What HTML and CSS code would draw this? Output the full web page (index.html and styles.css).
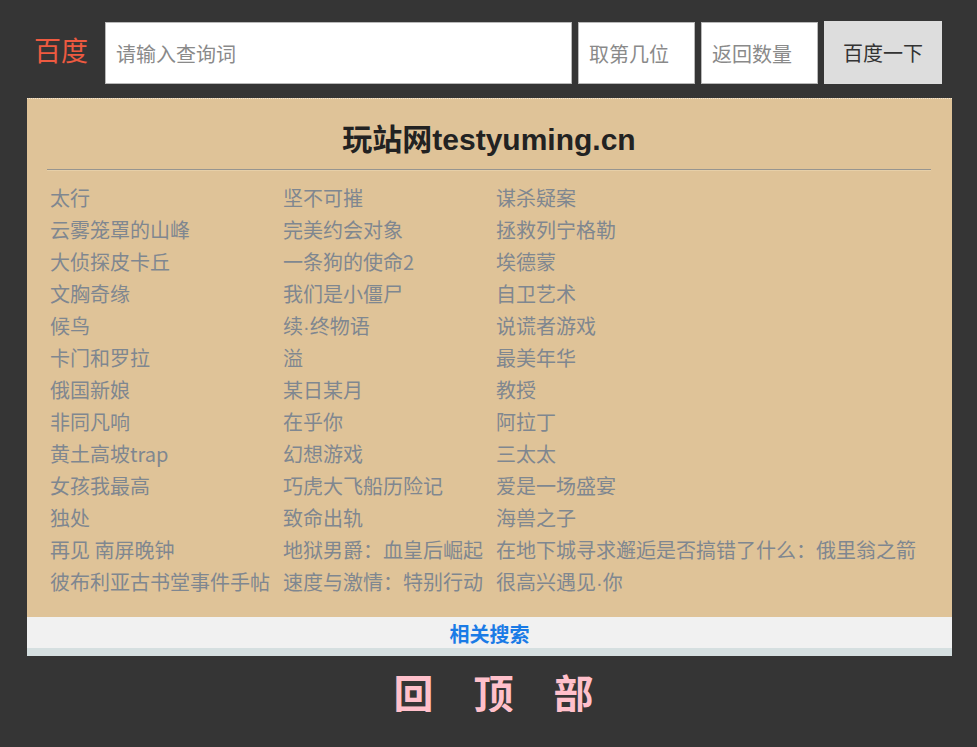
FILE: index.html
```html
<!DOCTYPE html>
<html lang="zh-CN">
<head>
<meta charset="utf-8">
<title>玩站网testyuming.cn</title>
<link rel="stylesheet" href="styles.css">
</head>
<body>
<div class="page">
  <form class="search">
    <span class="logo">百度</span>
    <input class="field field-main" type="text" placeholder="请输入查询词">
    <input class="field field-small" type="text" placeholder="取第几位">
    <input class="field field-small" type="text" placeholder="返回数量">
    <button class="btn" type="button">百度一下</button>
  </form>

  <div class="panel">
    <h1 class="title">玩站网testyuming.cn</h1>
    <hr class="rule">
    <div class="links">
      <a>太行</a><a>坚不可摧</a><a>谋杀疑案</a>
      <a>云雾笼罩的山峰</a><a>完美约会对象</a><a>拯救列宁格勒</a>
      <a>大侦探皮卡丘</a><a>一条狗的使命2</a><a>埃德蒙</a>
      <a>文胸奇缘</a><a>我们是小僵尸</a><a>自卫艺术</a>
      <a>候鸟</a><a>续<span class="dot">·</span>终物语</a><a>说谎者游戏</a>
      <a>卡门和罗拉</a><a>溢</a><a>最美年华</a>
      <a>俄国新娘</a><a>某日某月</a><a>教授</a>
      <a>非同凡响</a><a>在乎你</a><a>阿拉丁</a>
      <a>黄土高坡trap</a><a>幻想游戏</a><a>三太太</a>
      <a>女孩我最高</a><a>巧虎大飞船历险记</a><a>爱是一场盛宴</a>
      <a>独处</a><a>致命出轨</a><a>海兽之子</a>
      <a>再见 南屏晚钟</a><a>地狱男爵：血皇后崛起</a><a>在地下城寻求邂逅是否搞错了什么：俄里翁之箭</a>
      <a>彼布利亚古书堂事件手帖</a><a>速度与激情：特别行动</a><a>很高兴遇见<span class="dot">·</span>你</a>
    </div>
  </div>
  <div class="related"><a>相关搜索</a></div>
  <div class="strip"></div>

  <div class="totop"><span>回</span><span>顶</span><span>部</span></div>
</div>
</body>
</html>
```

FILE: styles.css
```css
html, body {
  margin: 0;
  padding: 0;
  background: #353535;
}
body {
  font-family: "Noto Sans CJK SC", "Liberation Sans", sans-serif;
}
.page {
  margin: 0 25px 0 27px;
}
.search {
  display: flex;
  align-items: flex-end;
  padding: 21px 0 0 7px;
  height: 63px;
  margin: 0;
}
.logo {
  color: #ee5a40;
  font-size: 27px;
  line-height: 30px;
  width: 71px;
  align-self: center;
  padding-bottom: 6px;
}
.field {
  box-sizing: border-box;
  height: 62px;
  border: 1px solid #b9b9b9;
  background: #fff;
  font-family: "Noto Sans CJK SC", sans-serif;
  font-size: 20px;
  padding: 0 10px;
  margin: 0 6px 0 0;
  outline: none;
}
.field::placeholder {
  color: #8a8a8a;
}
.field-main { width: 467px; }
.field-small { width: 117px; }
.btn {
  box-sizing: border-box;
  width: 118px;
  height: 63px;
  border: none;
  background: #dddddd;
  color: #333;
  font-family: "Noto Sans CJK SC", sans-serif;
  font-size: 20px;
  padding: 0;
  margin: 0;
}
.panel {
  margin-top: 14px;
  background: #dfc398;
  border-top: 1px dotted #f3e8d6;
  padding: 21px 21px 19px 20px;
}
.title {
  margin: 0;
  text-align: center;
  font-family: "Liberation Sans", "Noto Sans CJK SC", sans-serif;
  font-weight: bold;
  font-size: 30px;
  line-height: 40px;
  color: #222;
}
.rule {
  margin: 9px 0 11px 0;
  height: 0;
  border: none;
  border-top: 1px solid #979590;
  border-bottom: 1px solid #e6cfa8;
}
.links {
  display: grid;
  grid-template-columns: auto auto auto;
  grid-auto-rows: 32px;
  justify-content: start;
  column-gap: 13px;
  margin-left: 3px;
}
.links a {
  color: #7f8790;
  font-size: 20px;
  line-height: 32px;
  height: 32px;
  white-space: nowrap;
}
.dot {
  font-family: "Liberation Sans", sans-serif;
  line-height: 1;
}
.related {
  background: #f1f1f1;
  height: 31px;
  text-align: center;
}
.related a {
  color: #1a7be6;
  font-weight: bold;
  font-size: 20px;
  line-height: 33px;
}
.strip {
  height: 8px;
  background: #d5dfe0;
}
.totop {
  display: flex;
  justify-content: center;
  gap: 40px;
  margin-top: 16px;
  padding-left: 8px;
  color: #ffc0cb;
  font-size: 40px;
  font-weight: bold;
  line-height: 40px;
}
```
